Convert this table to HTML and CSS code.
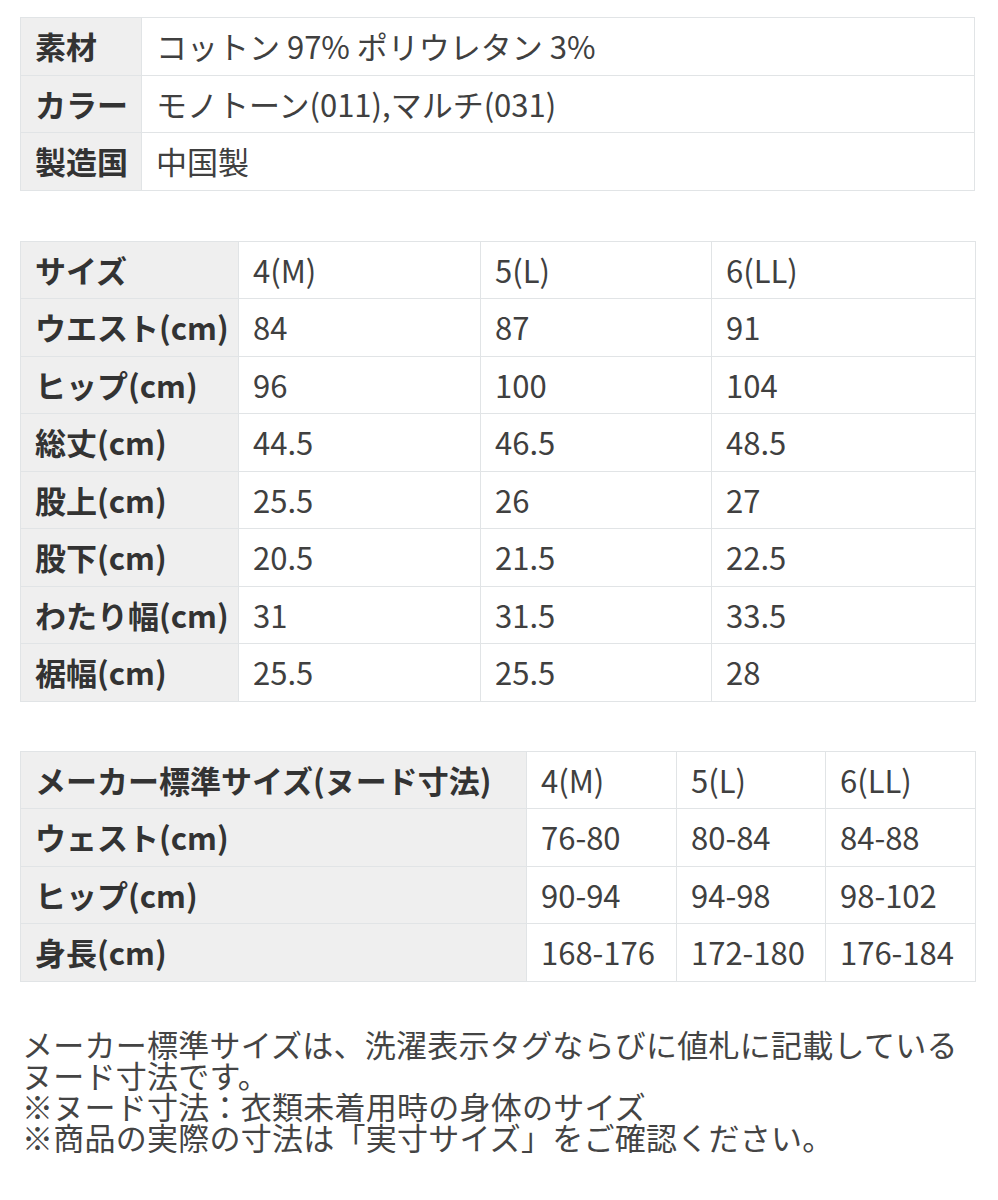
FILE: index.html
```html
<!DOCTYPE html>
<html lang="ja">
<head>
<meta charset="utf-8">
<link rel="stylesheet" href="styles.css">
</head>
<body>
<div class="page">
  <table class="spec spec-info">
    <colgroup><col class="c-info-label"><col></colgroup>
    <tr><th>素材</th><td>コットン 97% ポリウレタン 3%</td></tr>
    <tr><th>カラー</th><td>モノトーン(011),マルチ(031)</td></tr>
    <tr><th>製造国</th><td>中国製</td></tr>
  </table>

  <table class="spec spec-size">
    <colgroup><col class="c-s1"><col class="c-s2"><col class="c-s3"><col class="c-s4"></colgroup>
    <tr><th>サイズ</th><td>4(M)</td><td>5(L)</td><td>6(LL)</td></tr>
    <tr><th>ウエスト(cm)</th><td>84</td><td>87</td><td>91</td></tr>
    <tr><th>ヒップ(cm)</th><td>96</td><td>100</td><td>104</td></tr>
    <tr><th>総丈(cm)</th><td>44.5</td><td>46.5</td><td>48.5</td></tr>
    <tr><th>股上(cm)</th><td>25.5</td><td>26</td><td>27</td></tr>
    <tr><th>股下(cm)</th><td>20.5</td><td>21.5</td><td>22.5</td></tr>
    <tr><th>わたり幅(cm)</th><td>31</td><td>31.5</td><td>33.5</td></tr>
    <tr><th>裾幅(cm)</th><td>25.5</td><td>25.5</td><td>28</td></tr>
  </table>

  <table class="spec spec-nude">
    <colgroup><col class="c-n1"><col class="c-n2"><col class="c-n3"><col class="c-n4"></colgroup>
    <tr><th>メーカー標準サイズ(ヌード寸法)</th><td>4(M)</td><td>5(L)</td><td>6(LL)</td></tr>
    <tr><th>ウェスト(cm)</th><td>76-80</td><td>80-84</td><td>84-88</td></tr>
    <tr><th>ヒップ(cm)</th><td>90-94</td><td>94-98</td><td>98-102</td></tr>
    <tr><th>身長(cm)</th><td>168-176</td><td>172-180</td><td>176-184</td></tr>
  </table>

  <p class="note">メーカー標準サイズは、洗濯表示タグならびに値札に記載している<br>ヌード寸法です。<br>※ヌード寸法：衣類未着用時の身体のサイズ<br>※商品の実際の寸法は「実寸サイズ」をご確認ください。</p>
</div>
</body>
</html>
```

FILE: styles.css
```css
html, body {
  margin: 0;
  padding: 0;
  background: #ffffff;
}
body {
  font-family: "Noto Sans CJK JP", "Noto Sans", sans-serif;
  color: #3a3a3a;
}
.page {
  padding: 17px 23px 0 20px;
  display: flex;
  flex-direction: column;
  gap: 49px;
}
.spec {
  width: 955px;
  border-collapse: collapse;
  table-layout: fixed;
  font-size: 31px;
}
.spec th, .spec td {
  border: 1px solid #e1e4e6;
  padding: 6px 14px 6px 14px;
  height: 44.5px;
  line-height: 44.5px;
  text-align: left;
  white-space: nowrap;
  vertical-align: middle;
}
.spec th {
  background: #efefef;
  font-weight: 700;
  color: #333333;
}
.spec td {
  font-weight: 400;
  color: #404040;
}
.spec-info {
  margin-bottom: 1px;
}
.c-info-label { width: 121px; }
.c-s1 { width: 218px; }
.c-s2 { width: 242px; }
.c-s3 { width: 231px; }
.c-s4 { width: 264px; }
.c-n1 { width: 506px; }
.c-n2 { width: 150px; }
.c-n3 { width: 149px; }
.c-n4 { width: 150px; }
.note {
  margin: -3px 0 0 0;
  padding-left: 2px;
  font-size: 31px;
  line-height: 31.3px;
  letter-spacing: 0.25px;
  color: #444444;
  width: 965px;
}
```
